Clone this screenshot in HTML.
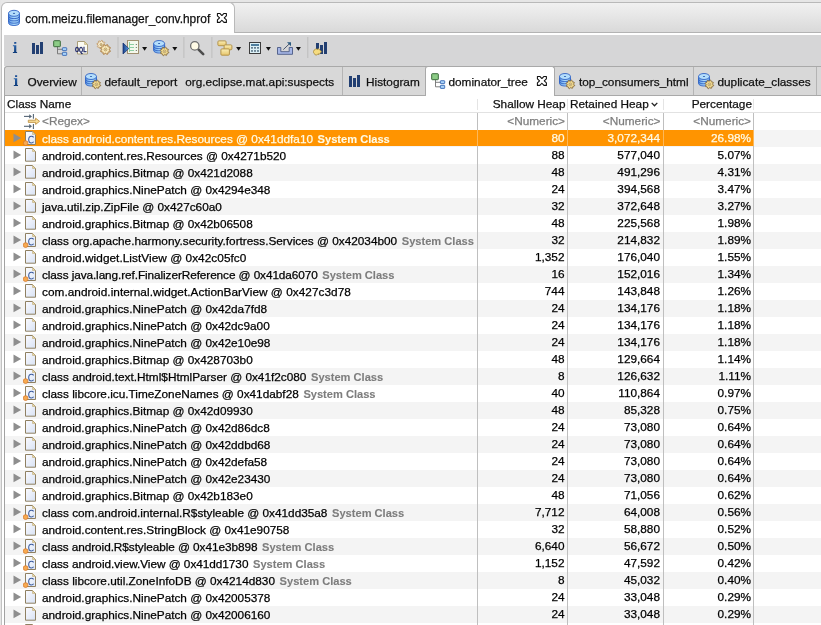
<!DOCTYPE html>
<html><head><meta charset="utf-8">
<style>
*{margin:0;padding:0;box-sizing:border-box}
html,body{width:821px;height:625px;overflow:hidden;background:#fff}
#wrap{position:absolute;left:0;top:0;width:821px;height:625px;will-change:transform}
body{position:relative;font-family:"Liberation Sans",sans-serif;font-size:11.8px;color:#000;-webkit-text-stroke:0.25px currentColor}
.abs{position:absolute}
#lf0{position:absolute;left:0;top:0;width:1px;height:625px;background:#e6e6e6}
#lf1{position:absolute;left:1px;top:30px;width:1px;height:595px;background:#c2c2c2}
#topstrip{position:absolute;left:0;top:0;width:821px;height:2px;background:#e6e6e6}
#titlebar{position:absolute;left:228px;top:2px;width:593px;height:31px;border-top:1px solid #b9b9b9;border-bottom:1px solid #b3b3b3;background:linear-gradient(#f1f1f1,#d9d9d9)}
#titletab{position:absolute;left:1px;top:2px;width:234px;height:31px;background:#fff;border:1px solid #b9b9b9;border-bottom:none;border-radius:6px 6px 0 0}
#titletext{position:absolute;left:25.3px;top:11.2px;line-height:17px;font-size:11.95px;white-space:nowrap;color:#111}
#toolbar{position:absolute;left:4px;top:35px;width:817px;height:31px;background:#d6d6d7}
.tsep{position:absolute;top:37px;width:1px;height:21px;background:#bcbcbc}
.dd{position:absolute;top:47px;width:0;height:0;border-left:2.6px solid transparent;border-right:2.6px solid transparent;border-top:4px solid #111}
#tabbar{position:absolute;left:4px;top:66px;width:817px;height:30px;background:#d8d8d8;border-top:1px solid #a9a9a9;border-bottom:1px solid #a9a9a9;border-left:1px solid #a9a9a9;border-top-left-radius:3px}
.tabsep{position:absolute;top:67px;width:1px;height:28px;background:#b4b4b4}
#acttab{position:absolute;left:425px;top:66px;width:130px;height:30px;background:#fff;border:1px solid #a9a9a9;border-bottom:none;border-radius:3px 3px 0 0}
.tabtext{position:absolute;top:74.4px;line-height:17px;white-space:nowrap;color:#111}
#table{position:absolute;left:4px;top:96px;width:817px;height:529px;background:#fff;border-left:1px solid #a2a2a2}
.hdr{position:absolute;line-height:17px;white-space:nowrap;color:#111;top:96.3px}
#hline{position:absolute;left:5px;top:112px;width:816px;height:1px;background:#e2e2e2}
.hsep{position:absolute;top:99px;width:1px;height:11px;background:#e4e4e4}
.rsep{position:absolute;top:113px;width:1px;height:17px;background:#bfbfbf}
.gray{color:#7e7e7e}
.row{position:absolute;left:5px;width:816px;height:17px}
.row.even{background:#f4f4f4}
.row.odd{background:#fff}
.selbg{position:absolute;left:0;top:0;width:748px;height:16px;background:#ff9400}
.tri-wrap{position:absolute;left:8px;top:3px;width:9px;height:10px}
.tri{display:block}
.ico-wrap{position:absolute;top:1px}
.ico-wrap.f{left:19.5px}
.ico-wrap.c{left:17.5px}
.ico{display:block}
.name{position:absolute;left:37px;top:0.8px;line-height:17px;white-space:nowrap}
.sys{font-weight:bold;color:#7d7d7d;font-size:11.1px;margin-left:4.6px;letter-spacing:0;-webkit-text-stroke:0.1px currentColor}
.num{position:absolute;top:0.3px;line-height:17px;text-align:right;white-space:nowrap}
.c1{right:calc(816px - 559.5px)}
.c2{right:calc(816px - 655px)}
.c3{right:calc(816px - 746px)}
.sep{position:absolute;top:0;width:1px;height:17px;background:#bfbfbf}
.s1{left:472px}.s2{left:562px}.s3{left:658px}.s4{left:748px}
.sel .name,.sel .num,.sel .sys{color:#fffbe6}
.sel .sep{background:linear-gradient(#fcb85a 0,#fcb85a 16px,#bfbfbf 16px)}
</style></head><body><div id="wrap">
<div id="topstrip"></div>
<div id="titlebar"></div>
<div class="abs" style="left:0;top:0;width:12px;height:12px;background:#e8e8e8"></div><div id="titletab"></div>
<div id="lf0"></div><div id="lf1"></div>
<div id="titletext">com.meizu.filemanager_conv.hprof</div>


<div id="toolbar"></div>
<!--TOOLBAR-->
<div id="tabbar"></div>
<div class="tabsep" style="left:81px"></div>
<div class="tabsep" style="left:342px"></div>
<div class="tabsep" style="left:693px"></div>
<div class="tabsep" style="left:816px"></div>
<div id="acttab"></div>
<!--TABS-->
<div class="tabtext" style="left:27.5px">Overview</div>
<div class="tabtext" style="left:104.5px">default_report</div><div class="tabtext" style="left:185.3px">org.eclipse.mat.api:suspects</div>
<div class="tabtext" style="left:366px">Histogram</div>
<div class="tabtext" style="left:448.5px">dominator_tree</div>
<div class="tabtext" style="left:579px">top_consumers_html</div>
<div class="tabtext" style="left:717.5px">duplicate_classes</div>

<div id="table"></div>
<div class="hdr" style="left:7px">Class Name</div>
<div class="hdr" style="right:calc(821px - 565.5px)">Shallow Heap</div>
<div class="hdr" style="left:570px">Retained Heap</div>
<svg class="abs" style="left:651px;top:102px" width="7" height="5" viewBox="0 0 7 5"><path d="M0.7 0.9 L3.5 3.8 L6.3 0.9" fill="none" stroke="#222" stroke-width="1.3"/></svg>
<div class="hdr" style="right:calc(821px - 752px)">Percentage</div>
<div class="hsep" style="left:477px"></div><div class="hsep" style="left:567px"></div><div class="hsep" style="left:663px"></div><div class="hsep" style="left:753px"></div>
<div id="hline"></div>
<!--REGEX-->
<div class="abs gray" style="left:42px;top:113px;line-height:17px">&lt;Regex&gt;</div>
<div class="abs gray" style="right:calc(821px - 565px);top:113px;line-height:17px">&lt;Numeric&gt;</div>
<div class="abs gray" style="right:calc(821px - 660.5px);top:113px;line-height:17px">&lt;Numeric&gt;</div>
<div class="abs gray" style="right:calc(821px - 751px);top:113px;line-height:17px">&lt;Numeric&gt;</div>
<div class="rsep" style="left:477px"></div><div class="rsep" style="left:567px"></div><div class="rsep" style="left:663px"></div><div class="rsep" style="left:753px"></div>
<div class="row even sel" style="top:130px"><div class="selbg"></div><div class="tri-wrap"><svg class="tri" width="9" height="10" viewBox="0 0 9 10"><path d="M0.5 0.5 L8.2 4.9 L0.5 9.3 Z" fill="#8e8e8e"/></svg></div><div class="ico-wrap c"><svg class="ico" width="15" height="16" viewBox="0 0 15 16"><defs><linearGradient id="cg" x1="0" y1="0" x2="1" y2="1"><stop offset="0" stop-color="#fdfdff"/><stop offset="1" stop-color="#dce6f6"/></linearGradient></defs><path d="M2.5 0.5 H9.5 L12.5 3.5 V13.5 H2.5 Z" fill="url(#cg)" stroke="#8f8062" stroke-width="1"/><path d="M9.5 0.5 V3.5 H12.5 Z" fill="#ead7a0" stroke="#b4a070" stroke-width="0.5"/><path d="M10.6 6.4 C10.1 5.6 9.4 5.2 8.4 5.2 C6.6 5.2 5.7 6.7 5.7 8.6 C5.7 10.5 6.6 12 8.4 12 C9.4 12 10.1 11.6 10.6 10.8" fill="none" stroke="#3a5a9c" stroke-width="1.05"/><circle cx="2.6" cy="12.1" r="2.4" fill="#f6aa50" stroke="#d8782c" stroke-width="0.8"/></svg></div><div class="name">class android.content.res.Resources @ 0x41ddfa10<span class="sys">System Class</span></div><div class="num c1">80</div><div class="num c2">3,072,344</div><div class="num c3">26.98%</div><div class="sep s1"></div><div class="sep s2"></div><div class="sep s3"></div><div class="sep s4"></div></div>
<div class="row odd" style="top:147px"><div class="tri-wrap"><svg class="tri" width="9" height="10" viewBox="0 0 9 10"><path d="M0.5 0.5 L8.2 4.9 L0.5 9.3 Z" fill="#8e8e8e"/></svg></div><div class="ico-wrap f"><svg class="ico" width="13" height="16" viewBox="0 0 13 16"><defs><linearGradient id="fg1" x1="0" y1="0" x2="1" y2="1"><stop offset="0" stop-color="#fbfbff"/><stop offset="1" stop-color="#d8e2f4"/></linearGradient></defs><path d="M0.5 0.5 H7.5 L10.5 3.5 V13.2 H0.5 Z" fill="url(#fg1)" stroke="#8f8062" stroke-width="1"/><path d="M7.5 0.5 V3.5 H10.5 Z" fill="#ead7a0" stroke="#b4a070" stroke-width="0.5"/></svg></div><div class="name">android.content.res.Resources @ 0x4271b520</div><div class="num c1">88</div><div class="num c2">577,040</div><div class="num c3">5.07%</div><div class="sep s1"></div><div class="sep s2"></div><div class="sep s3"></div><div class="sep s4"></div></div>
<div class="row even" style="top:164px"><div class="tri-wrap"><svg class="tri" width="9" height="10" viewBox="0 0 9 10"><path d="M0.5 0.5 L8.2 4.9 L0.5 9.3 Z" fill="#8e8e8e"/></svg></div><div class="ico-wrap f"><svg class="ico" width="13" height="16" viewBox="0 0 13 16"><defs><linearGradient id="fg2" x1="0" y1="0" x2="1" y2="1"><stop offset="0" stop-color="#fbfbff"/><stop offset="1" stop-color="#d8e2f4"/></linearGradient></defs><path d="M0.5 0.5 H7.5 L10.5 3.5 V13.2 H0.5 Z" fill="url(#fg2)" stroke="#8f8062" stroke-width="1"/><path d="M7.5 0.5 V3.5 H10.5 Z" fill="#ead7a0" stroke="#b4a070" stroke-width="0.5"/></svg></div><div class="name">android.graphics.Bitmap @ 0x421d2088</div><div class="num c1">48</div><div class="num c2">491,296</div><div class="num c3">4.31%</div><div class="sep s1"></div><div class="sep s2"></div><div class="sep s3"></div><div class="sep s4"></div></div>
<div class="row odd" style="top:181px"><div class="tri-wrap"><svg class="tri" width="9" height="10" viewBox="0 0 9 10"><path d="M0.5 0.5 L8.2 4.9 L0.5 9.3 Z" fill="#8e8e8e"/></svg></div><div class="ico-wrap f"><svg class="ico" width="13" height="16" viewBox="0 0 13 16"><defs><linearGradient id="fg3" x1="0" y1="0" x2="1" y2="1"><stop offset="0" stop-color="#fbfbff"/><stop offset="1" stop-color="#d8e2f4"/></linearGradient></defs><path d="M0.5 0.5 H7.5 L10.5 3.5 V13.2 H0.5 Z" fill="url(#fg3)" stroke="#8f8062" stroke-width="1"/><path d="M7.5 0.5 V3.5 H10.5 Z" fill="#ead7a0" stroke="#b4a070" stroke-width="0.5"/></svg></div><div class="name">android.graphics.NinePatch @ 0x4294e348</div><div class="num c1">24</div><div class="num c2">394,568</div><div class="num c3">3.47%</div><div class="sep s1"></div><div class="sep s2"></div><div class="sep s3"></div><div class="sep s4"></div></div>
<div class="row even" style="top:198px"><div class="tri-wrap"><svg class="tri" width="9" height="10" viewBox="0 0 9 10"><path d="M0.5 0.5 L8.2 4.9 L0.5 9.3 Z" fill="#8e8e8e"/></svg></div><div class="ico-wrap f"><svg class="ico" width="13" height="16" viewBox="0 0 13 16"><defs><linearGradient id="fg4" x1="0" y1="0" x2="1" y2="1"><stop offset="0" stop-color="#fbfbff"/><stop offset="1" stop-color="#d8e2f4"/></linearGradient></defs><path d="M0.5 0.5 H7.5 L10.5 3.5 V13.2 H0.5 Z" fill="url(#fg4)" stroke="#8f8062" stroke-width="1"/><path d="M7.5 0.5 V3.5 H10.5 Z" fill="#ead7a0" stroke="#b4a070" stroke-width="0.5"/></svg></div><div class="name">java.util.zip.ZipFile @ 0x427c60a0</div><div class="num c1">32</div><div class="num c2">372,648</div><div class="num c3">3.27%</div><div class="sep s1"></div><div class="sep s2"></div><div class="sep s3"></div><div class="sep s4"></div></div>
<div class="row odd" style="top:215px"><div class="tri-wrap"><svg class="tri" width="9" height="10" viewBox="0 0 9 10"><path d="M0.5 0.5 L8.2 4.9 L0.5 9.3 Z" fill="#8e8e8e"/></svg></div><div class="ico-wrap f"><svg class="ico" width="13" height="16" viewBox="0 0 13 16"><defs><linearGradient id="fg5" x1="0" y1="0" x2="1" y2="1"><stop offset="0" stop-color="#fbfbff"/><stop offset="1" stop-color="#d8e2f4"/></linearGradient></defs><path d="M0.5 0.5 H7.5 L10.5 3.5 V13.2 H0.5 Z" fill="url(#fg5)" stroke="#8f8062" stroke-width="1"/><path d="M7.5 0.5 V3.5 H10.5 Z" fill="#ead7a0" stroke="#b4a070" stroke-width="0.5"/></svg></div><div class="name">android.graphics.Bitmap @ 0x42b06508</div><div class="num c1">48</div><div class="num c2">225,568</div><div class="num c3">1.98%</div><div class="sep s1"></div><div class="sep s2"></div><div class="sep s3"></div><div class="sep s4"></div></div>
<div class="row even" style="top:232px"><div class="tri-wrap"><svg class="tri" width="9" height="10" viewBox="0 0 9 10"><path d="M0.5 0.5 L8.2 4.9 L0.5 9.3 Z" fill="#8e8e8e"/></svg></div><div class="ico-wrap c"><svg class="ico" width="15" height="16" viewBox="0 0 15 16"><defs><linearGradient id="cg" x1="0" y1="0" x2="1" y2="1"><stop offset="0" stop-color="#fdfdff"/><stop offset="1" stop-color="#dce6f6"/></linearGradient></defs><path d="M2.5 0.5 H9.5 L12.5 3.5 V13.5 H2.5 Z" fill="url(#cg)" stroke="#8f8062" stroke-width="1"/><path d="M9.5 0.5 V3.5 H12.5 Z" fill="#ead7a0" stroke="#b4a070" stroke-width="0.5"/><path d="M10.6 6.4 C10.1 5.6 9.4 5.2 8.4 5.2 C6.6 5.2 5.7 6.7 5.7 8.6 C5.7 10.5 6.6 12 8.4 12 C9.4 12 10.1 11.6 10.6 10.8" fill="none" stroke="#3a5a9c" stroke-width="1.05"/><circle cx="2.6" cy="12.1" r="2.4" fill="#f6aa50" stroke="#d8782c" stroke-width="0.8"/></svg></div><div class="name">class org.apache.harmony.security.fortress.Services @ 0x42034b00<span class="sys">System Class</span></div><div class="num c1">32</div><div class="num c2">214,832</div><div class="num c3">1.89%</div><div class="sep s1"></div><div class="sep s2"></div><div class="sep s3"></div><div class="sep s4"></div></div>
<div class="row odd" style="top:249px"><div class="tri-wrap"><svg class="tri" width="9" height="10" viewBox="0 0 9 10"><path d="M0.5 0.5 L8.2 4.9 L0.5 9.3 Z" fill="#8e8e8e"/></svg></div><div class="ico-wrap f"><svg class="ico" width="13" height="16" viewBox="0 0 13 16"><defs><linearGradient id="fg7" x1="0" y1="0" x2="1" y2="1"><stop offset="0" stop-color="#fbfbff"/><stop offset="1" stop-color="#d8e2f4"/></linearGradient></defs><path d="M0.5 0.5 H7.5 L10.5 3.5 V13.2 H0.5 Z" fill="url(#fg7)" stroke="#8f8062" stroke-width="1"/><path d="M7.5 0.5 V3.5 H10.5 Z" fill="#ead7a0" stroke="#b4a070" stroke-width="0.5"/></svg></div><div class="name" style="letter-spacing:0.05px">android.widget.ListView @ 0x42c05fc0</div><div class="num c1">1,352</div><div class="num c2">176,040</div><div class="num c3">1.55%</div><div class="sep s1"></div><div class="sep s2"></div><div class="sep s3"></div><div class="sep s4"></div></div>
<div class="row even" style="top:266px"><div class="tri-wrap"><svg class="tri" width="9" height="10" viewBox="0 0 9 10"><path d="M0.5 0.5 L8.2 4.9 L0.5 9.3 Z" fill="#8e8e8e"/></svg></div><div class="ico-wrap c"><svg class="ico" width="15" height="16" viewBox="0 0 15 16"><defs><linearGradient id="cg" x1="0" y1="0" x2="1" y2="1"><stop offset="0" stop-color="#fdfdff"/><stop offset="1" stop-color="#dce6f6"/></linearGradient></defs><path d="M2.5 0.5 H9.5 L12.5 3.5 V13.5 H2.5 Z" fill="url(#cg)" stroke="#8f8062" stroke-width="1"/><path d="M9.5 0.5 V3.5 H12.5 Z" fill="#ead7a0" stroke="#b4a070" stroke-width="0.5"/><path d="M10.6 6.4 C10.1 5.6 9.4 5.2 8.4 5.2 C6.6 5.2 5.7 6.7 5.7 8.6 C5.7 10.5 6.6 12 8.4 12 C9.4 12 10.1 11.6 10.6 10.8" fill="none" stroke="#3a5a9c" stroke-width="1.05"/><circle cx="2.6" cy="12.1" r="2.4" fill="#f6aa50" stroke="#d8782c" stroke-width="0.8"/></svg></div><div class="name" style="letter-spacing:-0.088px">class java.lang.ref.FinalizerReference @ 0x41da6070<span class="sys">System Class</span></div><div class="num c1">16</div><div class="num c2">152,016</div><div class="num c3">1.34%</div><div class="sep s1"></div><div class="sep s2"></div><div class="sep s3"></div><div class="sep s4"></div></div>
<div class="row odd" style="top:283px"><div class="tri-wrap"><svg class="tri" width="9" height="10" viewBox="0 0 9 10"><path d="M0.5 0.5 L8.2 4.9 L0.5 9.3 Z" fill="#8e8e8e"/></svg></div><div class="ico-wrap f"><svg class="ico" width="13" height="16" viewBox="0 0 13 16"><defs><linearGradient id="fg9" x1="0" y1="0" x2="1" y2="1"><stop offset="0" stop-color="#fbfbff"/><stop offset="1" stop-color="#d8e2f4"/></linearGradient></defs><path d="M0.5 0.5 H7.5 L10.5 3.5 V13.2 H0.5 Z" fill="url(#fg9)" stroke="#8f8062" stroke-width="1"/><path d="M7.5 0.5 V3.5 H10.5 Z" fill="#ead7a0" stroke="#b4a070" stroke-width="0.5"/></svg></div><div class="name" style="letter-spacing:0.037px">com.android.internal.widget.ActionBarView @ 0x427c3d78</div><div class="num c1">744</div><div class="num c2">143,848</div><div class="num c3">1.26%</div><div class="sep s1"></div><div class="sep s2"></div><div class="sep s3"></div><div class="sep s4"></div></div>
<div class="row even" style="top:300px"><div class="tri-wrap"><svg class="tri" width="9" height="10" viewBox="0 0 9 10"><path d="M0.5 0.5 L8.2 4.9 L0.5 9.3 Z" fill="#8e8e8e"/></svg></div><div class="ico-wrap f"><svg class="ico" width="13" height="16" viewBox="0 0 13 16"><defs><linearGradient id="fg10" x1="0" y1="0" x2="1" y2="1"><stop offset="0" stop-color="#fbfbff"/><stop offset="1" stop-color="#d8e2f4"/></linearGradient></defs><path d="M0.5 0.5 H7.5 L10.5 3.5 V13.2 H0.5 Z" fill="url(#fg10)" stroke="#8f8062" stroke-width="1"/><path d="M7.5 0.5 V3.5 H10.5 Z" fill="#ead7a0" stroke="#b4a070" stroke-width="0.5"/></svg></div><div class="name">android.graphics.NinePatch @ 0x42da7fd8</div><div class="num c1">24</div><div class="num c2">134,176</div><div class="num c3">1.18%</div><div class="sep s1"></div><div class="sep s2"></div><div class="sep s3"></div><div class="sep s4"></div></div>
<div class="row odd" style="top:317px"><div class="tri-wrap"><svg class="tri" width="9" height="10" viewBox="0 0 9 10"><path d="M0.5 0.5 L8.2 4.9 L0.5 9.3 Z" fill="#8e8e8e"/></svg></div><div class="ico-wrap f"><svg class="ico" width="13" height="16" viewBox="0 0 13 16"><defs><linearGradient id="fg11" x1="0" y1="0" x2="1" y2="1"><stop offset="0" stop-color="#fbfbff"/><stop offset="1" stop-color="#d8e2f4"/></linearGradient></defs><path d="M0.5 0.5 H7.5 L10.5 3.5 V13.2 H0.5 Z" fill="url(#fg11)" stroke="#8f8062" stroke-width="1"/><path d="M7.5 0.5 V3.5 H10.5 Z" fill="#ead7a0" stroke="#b4a070" stroke-width="0.5"/></svg></div><div class="name">android.graphics.NinePatch @ 0x42dc9a00</div><div class="num c1">24</div><div class="num c2">134,176</div><div class="num c3">1.18%</div><div class="sep s1"></div><div class="sep s2"></div><div class="sep s3"></div><div class="sep s4"></div></div>
<div class="row even" style="top:334px"><div class="tri-wrap"><svg class="tri" width="9" height="10" viewBox="0 0 9 10"><path d="M0.5 0.5 L8.2 4.9 L0.5 9.3 Z" fill="#8e8e8e"/></svg></div><div class="ico-wrap f"><svg class="ico" width="13" height="16" viewBox="0 0 13 16"><defs><linearGradient id="fg12" x1="0" y1="0" x2="1" y2="1"><stop offset="0" stop-color="#fbfbff"/><stop offset="1" stop-color="#d8e2f4"/></linearGradient></defs><path d="M0.5 0.5 H7.5 L10.5 3.5 V13.2 H0.5 Z" fill="url(#fg12)" stroke="#8f8062" stroke-width="1"/><path d="M7.5 0.5 V3.5 H10.5 Z" fill="#ead7a0" stroke="#b4a070" stroke-width="0.5"/></svg></div><div class="name">android.graphics.NinePatch @ 0x42e10e98</div><div class="num c1">24</div><div class="num c2">134,176</div><div class="num c3">1.18%</div><div class="sep s1"></div><div class="sep s2"></div><div class="sep s3"></div><div class="sep s4"></div></div>
<div class="row odd" style="top:351px"><div class="tri-wrap"><svg class="tri" width="9" height="10" viewBox="0 0 9 10"><path d="M0.5 0.5 L8.2 4.9 L0.5 9.3 Z" fill="#8e8e8e"/></svg></div><div class="ico-wrap f"><svg class="ico" width="13" height="16" viewBox="0 0 13 16"><defs><linearGradient id="fg13" x1="0" y1="0" x2="1" y2="1"><stop offset="0" stop-color="#fbfbff"/><stop offset="1" stop-color="#d8e2f4"/></linearGradient></defs><path d="M0.5 0.5 H7.5 L10.5 3.5 V13.2 H0.5 Z" fill="url(#fg13)" stroke="#8f8062" stroke-width="1"/><path d="M7.5 0.5 V3.5 H10.5 Z" fill="#ead7a0" stroke="#b4a070" stroke-width="0.5"/></svg></div><div class="name">android.graphics.Bitmap @ 0x428703b0</div><div class="num c1">48</div><div class="num c2">129,664</div><div class="num c3">1.14%</div><div class="sep s1"></div><div class="sep s2"></div><div class="sep s3"></div><div class="sep s4"></div></div>
<div class="row even" style="top:368px"><div class="tri-wrap"><svg class="tri" width="9" height="10" viewBox="0 0 9 10"><path d="M0.5 0.5 L8.2 4.9 L0.5 9.3 Z" fill="#8e8e8e"/></svg></div><div class="ico-wrap c"><svg class="ico" width="15" height="16" viewBox="0 0 15 16"><defs><linearGradient id="cg" x1="0" y1="0" x2="1" y2="1"><stop offset="0" stop-color="#fdfdff"/><stop offset="1" stop-color="#dce6f6"/></linearGradient></defs><path d="M2.5 0.5 H9.5 L12.5 3.5 V13.5 H2.5 Z" fill="url(#cg)" stroke="#8f8062" stroke-width="1"/><path d="M9.5 0.5 V3.5 H12.5 Z" fill="#ead7a0" stroke="#b4a070" stroke-width="0.5"/><path d="M10.6 6.4 C10.1 5.6 9.4 5.2 8.4 5.2 C6.6 5.2 5.7 6.7 5.7 8.6 C5.7 10.5 6.6 12 8.4 12 C9.4 12 10.1 11.6 10.6 10.8" fill="none" stroke="#3a5a9c" stroke-width="1.05"/><circle cx="2.6" cy="12.1" r="2.4" fill="#f6aa50" stroke="#d8782c" stroke-width="0.8"/></svg></div><div class="name">class android.text.Html$HtmlParser @ 0x41f2c080<span class="sys">System Class</span></div><div class="num c1">8</div><div class="num c2">126,632</div><div class="num c3">1.11%</div><div class="sep s1"></div><div class="sep s2"></div><div class="sep s3"></div><div class="sep s4"></div></div>
<div class="row odd" style="top:385px"><div class="tri-wrap"><svg class="tri" width="9" height="10" viewBox="0 0 9 10"><path d="M0.5 0.5 L8.2 4.9 L0.5 9.3 Z" fill="#8e8e8e"/></svg></div><div class="ico-wrap c"><svg class="ico" width="15" height="16" viewBox="0 0 15 16"><defs><linearGradient id="cg" x1="0" y1="0" x2="1" y2="1"><stop offset="0" stop-color="#fdfdff"/><stop offset="1" stop-color="#dce6f6"/></linearGradient></defs><path d="M2.5 0.5 H9.5 L12.5 3.5 V13.5 H2.5 Z" fill="url(#cg)" stroke="#8f8062" stroke-width="1"/><path d="M9.5 0.5 V3.5 H12.5 Z" fill="#ead7a0" stroke="#b4a070" stroke-width="0.5"/><path d="M10.6 6.4 C10.1 5.6 9.4 5.2 8.4 5.2 C6.6 5.2 5.7 6.7 5.7 8.6 C5.7 10.5 6.6 12 8.4 12 C9.4 12 10.1 11.6 10.6 10.8" fill="none" stroke="#3a5a9c" stroke-width="1.05"/><circle cx="2.6" cy="12.1" r="2.4" fill="#f6aa50" stroke="#d8782c" stroke-width="0.8"/></svg></div><div class="name">class libcore.icu.TimeZoneNames @ 0x41dabf28<span class="sys">System Class</span></div><div class="num c1">40</div><div class="num c2">110,864</div><div class="num c3">0.97%</div><div class="sep s1"></div><div class="sep s2"></div><div class="sep s3"></div><div class="sep s4"></div></div>
<div class="row even" style="top:402px"><div class="tri-wrap"><svg class="tri" width="9" height="10" viewBox="0 0 9 10"><path d="M0.5 0.5 L8.2 4.9 L0.5 9.3 Z" fill="#8e8e8e"/></svg></div><div class="ico-wrap f"><svg class="ico" width="13" height="16" viewBox="0 0 13 16"><defs><linearGradient id="fg16" x1="0" y1="0" x2="1" y2="1"><stop offset="0" stop-color="#fbfbff"/><stop offset="1" stop-color="#d8e2f4"/></linearGradient></defs><path d="M0.5 0.5 H7.5 L10.5 3.5 V13.2 H0.5 Z" fill="url(#fg16)" stroke="#8f8062" stroke-width="1"/><path d="M7.5 0.5 V3.5 H10.5 Z" fill="#ead7a0" stroke="#b4a070" stroke-width="0.5"/></svg></div><div class="name">android.graphics.Bitmap @ 0x42d09930</div><div class="num c1">48</div><div class="num c2">85,328</div><div class="num c3">0.75%</div><div class="sep s1"></div><div class="sep s2"></div><div class="sep s3"></div><div class="sep s4"></div></div>
<div class="row odd" style="top:419px"><div class="tri-wrap"><svg class="tri" width="9" height="10" viewBox="0 0 9 10"><path d="M0.5 0.5 L8.2 4.9 L0.5 9.3 Z" fill="#8e8e8e"/></svg></div><div class="ico-wrap f"><svg class="ico" width="13" height="16" viewBox="0 0 13 16"><defs><linearGradient id="fg17" x1="0" y1="0" x2="1" y2="1"><stop offset="0" stop-color="#fbfbff"/><stop offset="1" stop-color="#d8e2f4"/></linearGradient></defs><path d="M0.5 0.5 H7.5 L10.5 3.5 V13.2 H0.5 Z" fill="url(#fg17)" stroke="#8f8062" stroke-width="1"/><path d="M7.5 0.5 V3.5 H10.5 Z" fill="#ead7a0" stroke="#b4a070" stroke-width="0.5"/></svg></div><div class="name">android.graphics.NinePatch @ 0x42d86dc8</div><div class="num c1">24</div><div class="num c2">73,080</div><div class="num c3">0.64%</div><div class="sep s1"></div><div class="sep s2"></div><div class="sep s3"></div><div class="sep s4"></div></div>
<div class="row even" style="top:436px"><div class="tri-wrap"><svg class="tri" width="9" height="10" viewBox="0 0 9 10"><path d="M0.5 0.5 L8.2 4.9 L0.5 9.3 Z" fill="#8e8e8e"/></svg></div><div class="ico-wrap f"><svg class="ico" width="13" height="16" viewBox="0 0 13 16"><defs><linearGradient id="fg18" x1="0" y1="0" x2="1" y2="1"><stop offset="0" stop-color="#fbfbff"/><stop offset="1" stop-color="#d8e2f4"/></linearGradient></defs><path d="M0.5 0.5 H7.5 L10.5 3.5 V13.2 H0.5 Z" fill="url(#fg18)" stroke="#8f8062" stroke-width="1"/><path d="M7.5 0.5 V3.5 H10.5 Z" fill="#ead7a0" stroke="#b4a070" stroke-width="0.5"/></svg></div><div class="name">android.graphics.NinePatch @ 0x42ddbd68</div><div class="num c1">24</div><div class="num c2">73,080</div><div class="num c3">0.64%</div><div class="sep s1"></div><div class="sep s2"></div><div class="sep s3"></div><div class="sep s4"></div></div>
<div class="row odd" style="top:453px"><div class="tri-wrap"><svg class="tri" width="9" height="10" viewBox="0 0 9 10"><path d="M0.5 0.5 L8.2 4.9 L0.5 9.3 Z" fill="#8e8e8e"/></svg></div><div class="ico-wrap f"><svg class="ico" width="13" height="16" viewBox="0 0 13 16"><defs><linearGradient id="fg19" x1="0" y1="0" x2="1" y2="1"><stop offset="0" stop-color="#fbfbff"/><stop offset="1" stop-color="#d8e2f4"/></linearGradient></defs><path d="M0.5 0.5 H7.5 L10.5 3.5 V13.2 H0.5 Z" fill="url(#fg19)" stroke="#8f8062" stroke-width="1"/><path d="M7.5 0.5 V3.5 H10.5 Z" fill="#ead7a0" stroke="#b4a070" stroke-width="0.5"/></svg></div><div class="name">android.graphics.NinePatch @ 0x42defa58</div><div class="num c1">24</div><div class="num c2">73,080</div><div class="num c3">0.64%</div><div class="sep s1"></div><div class="sep s2"></div><div class="sep s3"></div><div class="sep s4"></div></div>
<div class="row even" style="top:470px"><div class="tri-wrap"><svg class="tri" width="9" height="10" viewBox="0 0 9 10"><path d="M0.5 0.5 L8.2 4.9 L0.5 9.3 Z" fill="#8e8e8e"/></svg></div><div class="ico-wrap f"><svg class="ico" width="13" height="16" viewBox="0 0 13 16"><defs><linearGradient id="fg20" x1="0" y1="0" x2="1" y2="1"><stop offset="0" stop-color="#fbfbff"/><stop offset="1" stop-color="#d8e2f4"/></linearGradient></defs><path d="M0.5 0.5 H7.5 L10.5 3.5 V13.2 H0.5 Z" fill="url(#fg20)" stroke="#8f8062" stroke-width="1"/><path d="M7.5 0.5 V3.5 H10.5 Z" fill="#ead7a0" stroke="#b4a070" stroke-width="0.5"/></svg></div><div class="name">android.graphics.NinePatch @ 0x42e23430</div><div class="num c1">24</div><div class="num c2">73,080</div><div class="num c3">0.64%</div><div class="sep s1"></div><div class="sep s2"></div><div class="sep s3"></div><div class="sep s4"></div></div>
<div class="row odd" style="top:487px"><div class="tri-wrap"><svg class="tri" width="9" height="10" viewBox="0 0 9 10"><path d="M0.5 0.5 L8.2 4.9 L0.5 9.3 Z" fill="#8e8e8e"/></svg></div><div class="ico-wrap f"><svg class="ico" width="13" height="16" viewBox="0 0 13 16"><defs><linearGradient id="fg21" x1="0" y1="0" x2="1" y2="1"><stop offset="0" stop-color="#fbfbff"/><stop offset="1" stop-color="#d8e2f4"/></linearGradient></defs><path d="M0.5 0.5 H7.5 L10.5 3.5 V13.2 H0.5 Z" fill="url(#fg21)" stroke="#8f8062" stroke-width="1"/><path d="M7.5 0.5 V3.5 H10.5 Z" fill="#ead7a0" stroke="#b4a070" stroke-width="0.5"/></svg></div><div class="name">android.graphics.Bitmap @ 0x42b183e0</div><div class="num c1">48</div><div class="num c2">71,056</div><div class="num c3">0.62%</div><div class="sep s1"></div><div class="sep s2"></div><div class="sep s3"></div><div class="sep s4"></div></div>
<div class="row even" style="top:504px"><div class="tri-wrap"><svg class="tri" width="9" height="10" viewBox="0 0 9 10"><path d="M0.5 0.5 L8.2 4.9 L0.5 9.3 Z" fill="#8e8e8e"/></svg></div><div class="ico-wrap c"><svg class="ico" width="15" height="16" viewBox="0 0 15 16"><defs><linearGradient id="cg" x1="0" y1="0" x2="1" y2="1"><stop offset="0" stop-color="#fdfdff"/><stop offset="1" stop-color="#dce6f6"/></linearGradient></defs><path d="M2.5 0.5 H9.5 L12.5 3.5 V13.5 H2.5 Z" fill="url(#cg)" stroke="#8f8062" stroke-width="1"/><path d="M9.5 0.5 V3.5 H12.5 Z" fill="#ead7a0" stroke="#b4a070" stroke-width="0.5"/><path d="M10.6 6.4 C10.1 5.6 9.4 5.2 8.4 5.2 C6.6 5.2 5.7 6.7 5.7 8.6 C5.7 10.5 6.6 12 8.4 12 C9.4 12 10.1 11.6 10.6 10.8" fill="none" stroke="#3a5a9c" stroke-width="1.05"/><circle cx="2.6" cy="12.1" r="2.4" fill="#f6aa50" stroke="#d8782c" stroke-width="0.8"/></svg></div><div class="name">class com.android.internal.R$styleable @ 0x41dd35a8<span class="sys">System Class</span></div><div class="num c1">7,712</div><div class="num c2">64,008</div><div class="num c3">0.56%</div><div class="sep s1"></div><div class="sep s2"></div><div class="sep s3"></div><div class="sep s4"></div></div>
<div class="row odd" style="top:521px"><div class="tri-wrap"><svg class="tri" width="9" height="10" viewBox="0 0 9 10"><path d="M0.5 0.5 L8.2 4.9 L0.5 9.3 Z" fill="#8e8e8e"/></svg></div><div class="ico-wrap f"><svg class="ico" width="13" height="16" viewBox="0 0 13 16"><defs><linearGradient id="fg23" x1="0" y1="0" x2="1" y2="1"><stop offset="0" stop-color="#fbfbff"/><stop offset="1" stop-color="#d8e2f4"/></linearGradient></defs><path d="M0.5 0.5 H7.5 L10.5 3.5 V13.2 H0.5 Z" fill="url(#fg23)" stroke="#8f8062" stroke-width="1"/><path d="M7.5 0.5 V3.5 H10.5 Z" fill="#ead7a0" stroke="#b4a070" stroke-width="0.5"/></svg></div><div class="name">android.content.res.StringBlock @ 0x41e90758</div><div class="num c1">32</div><div class="num c2">58,880</div><div class="num c3">0.52%</div><div class="sep s1"></div><div class="sep s2"></div><div class="sep s3"></div><div class="sep s4"></div></div>
<div class="row even" style="top:538px"><div class="tri-wrap"><svg class="tri" width="9" height="10" viewBox="0 0 9 10"><path d="M0.5 0.5 L8.2 4.9 L0.5 9.3 Z" fill="#8e8e8e"/></svg></div><div class="ico-wrap c"><svg class="ico" width="15" height="16" viewBox="0 0 15 16"><defs><linearGradient id="cg" x1="0" y1="0" x2="1" y2="1"><stop offset="0" stop-color="#fdfdff"/><stop offset="1" stop-color="#dce6f6"/></linearGradient></defs><path d="M2.5 0.5 H9.5 L12.5 3.5 V13.5 H2.5 Z" fill="url(#cg)" stroke="#8f8062" stroke-width="1"/><path d="M9.5 0.5 V3.5 H12.5 Z" fill="#ead7a0" stroke="#b4a070" stroke-width="0.5"/><path d="M10.6 6.4 C10.1 5.6 9.4 5.2 8.4 5.2 C6.6 5.2 5.7 6.7 5.7 8.6 C5.7 10.5 6.6 12 8.4 12 C9.4 12 10.1 11.6 10.6 10.8" fill="none" stroke="#3a5a9c" stroke-width="1.05"/><circle cx="2.6" cy="12.1" r="2.4" fill="#f6aa50" stroke="#d8782c" stroke-width="0.8"/></svg></div><div class="name" style="letter-spacing:-0.066px">class android.R$styleable @ 0x41e3b898<span class="sys">System Class</span></div><div class="num c1">6,640</div><div class="num c2">56,672</div><div class="num c3">0.50%</div><div class="sep s1"></div><div class="sep s2"></div><div class="sep s3"></div><div class="sep s4"></div></div>
<div class="row odd" style="top:555px"><div class="tri-wrap"><svg class="tri" width="9" height="10" viewBox="0 0 9 10"><path d="M0.5 0.5 L8.2 4.9 L0.5 9.3 Z" fill="#8e8e8e"/></svg></div><div class="ico-wrap c"><svg class="ico" width="15" height="16" viewBox="0 0 15 16"><defs><linearGradient id="cg" x1="0" y1="0" x2="1" y2="1"><stop offset="0" stop-color="#fdfdff"/><stop offset="1" stop-color="#dce6f6"/></linearGradient></defs><path d="M2.5 0.5 H9.5 L12.5 3.5 V13.5 H2.5 Z" fill="url(#cg)" stroke="#8f8062" stroke-width="1"/><path d="M9.5 0.5 V3.5 H12.5 Z" fill="#ead7a0" stroke="#b4a070" stroke-width="0.5"/><path d="M10.6 6.4 C10.1 5.6 9.4 5.2 8.4 5.2 C6.6 5.2 5.7 6.7 5.7 8.6 C5.7 10.5 6.6 12 8.4 12 C9.4 12 10.1 11.6 10.6 10.8" fill="none" stroke="#3a5a9c" stroke-width="1.05"/><circle cx="2.6" cy="12.1" r="2.4" fill="#f6aa50" stroke="#d8782c" stroke-width="0.8"/></svg></div><div class="name" style="letter-spacing:-0.04px">class android.view.View @ 0x41dd1730<span class="sys">System Class</span></div><div class="num c1">1,152</div><div class="num c2">47,592</div><div class="num c3">0.42%</div><div class="sep s1"></div><div class="sep s2"></div><div class="sep s3"></div><div class="sep s4"></div></div>
<div class="row even" style="top:572px"><div class="tri-wrap"><svg class="tri" width="9" height="10" viewBox="0 0 9 10"><path d="M0.5 0.5 L8.2 4.9 L0.5 9.3 Z" fill="#8e8e8e"/></svg></div><div class="ico-wrap c"><svg class="ico" width="15" height="16" viewBox="0 0 15 16"><defs><linearGradient id="cg" x1="0" y1="0" x2="1" y2="1"><stop offset="0" stop-color="#fdfdff"/><stop offset="1" stop-color="#dce6f6"/></linearGradient></defs><path d="M2.5 0.5 H9.5 L12.5 3.5 V13.5 H2.5 Z" fill="url(#cg)" stroke="#8f8062" stroke-width="1"/><path d="M9.5 0.5 V3.5 H12.5 Z" fill="#ead7a0" stroke="#b4a070" stroke-width="0.5"/><path d="M10.6 6.4 C10.1 5.6 9.4 5.2 8.4 5.2 C6.6 5.2 5.7 6.7 5.7 8.6 C5.7 10.5 6.6 12 8.4 12 C9.4 12 10.1 11.6 10.6 10.8" fill="none" stroke="#3a5a9c" stroke-width="1.05"/><circle cx="2.6" cy="12.1" r="2.4" fill="#f6aa50" stroke="#d8782c" stroke-width="0.8"/></svg></div><div class="name">class libcore.util.ZoneInfoDB @ 0x4214d830<span class="sys">System Class</span></div><div class="num c1">8</div><div class="num c2">45,032</div><div class="num c3">0.40%</div><div class="sep s1"></div><div class="sep s2"></div><div class="sep s3"></div><div class="sep s4"></div></div>
<div class="row odd" style="top:589px"><div class="tri-wrap"><svg class="tri" width="9" height="10" viewBox="0 0 9 10"><path d="M0.5 0.5 L8.2 4.9 L0.5 9.3 Z" fill="#8e8e8e"/></svg></div><div class="ico-wrap f"><svg class="ico" width="13" height="16" viewBox="0 0 13 16"><defs><linearGradient id="fg27" x1="0" y1="0" x2="1" y2="1"><stop offset="0" stop-color="#fbfbff"/><stop offset="1" stop-color="#d8e2f4"/></linearGradient></defs><path d="M0.5 0.5 H7.5 L10.5 3.5 V13.2 H0.5 Z" fill="url(#fg27)" stroke="#8f8062" stroke-width="1"/><path d="M7.5 0.5 V3.5 H10.5 Z" fill="#ead7a0" stroke="#b4a070" stroke-width="0.5"/></svg></div><div class="name">android.graphics.NinePatch @ 0x42005378</div><div class="num c1">24</div><div class="num c2">33,048</div><div class="num c3">0.29%</div><div class="sep s1"></div><div class="sep s2"></div><div class="sep s3"></div><div class="sep s4"></div></div>
<div class="row even" style="top:606px"><div class="tri-wrap"><svg class="tri" width="9" height="10" viewBox="0 0 9 10"><path d="M0.5 0.5 L8.2 4.9 L0.5 9.3 Z" fill="#8e8e8e"/></svg></div><div class="ico-wrap f"><svg class="ico" width="13" height="16" viewBox="0 0 13 16"><defs><linearGradient id="fg28" x1="0" y1="0" x2="1" y2="1"><stop offset="0" stop-color="#fbfbff"/><stop offset="1" stop-color="#d8e2f4"/></linearGradient></defs><path d="M0.5 0.5 H7.5 L10.5 3.5 V13.2 H0.5 Z" fill="url(#fg28)" stroke="#8f8062" stroke-width="1"/><path d="M7.5 0.5 V3.5 H10.5 Z" fill="#ead7a0" stroke="#b4a070" stroke-width="0.5"/></svg></div><div class="name">android.graphics.NinePatch @ 0x42006160</div><div class="num c1">24</div><div class="num c2">33,048</div><div class="num c3">0.29%</div><div class="sep s1"></div><div class="sep s2"></div><div class="sep s3"></div><div class="sep s4"></div></div>
<div class="row odd" style="top:623px"><div class="tri-wrap"><svg class="tri" width="9" height="10" viewBox="0 0 9 10"><path d="M0.5 0.5 L8.2 4.9 L0.5 9.3 Z" fill="#8e8e8e"/></svg></div><div class="ico-wrap f"><svg class="ico" width="13" height="16" viewBox="0 0 13 16"><defs><linearGradient id="fg29" x1="0" y1="0" x2="1" y2="1"><stop offset="0" stop-color="#fbfbff"/><stop offset="1" stop-color="#d8e2f4"/></linearGradient></defs><path d="M0.5 0.5 H7.5 L10.5 3.5 V13.2 H0.5 Z" fill="url(#fg29)" stroke="#8f8062" stroke-width="1"/><path d="M7.5 0.5 V3.5 H10.5 Z" fill="#ead7a0" stroke="#b4a070" stroke-width="0.5"/></svg></div><div class="sep s1"></div><div class="sep s2"></div><div class="sep s3"></div><div class="sep s4"></div></div>
<svg class="abs" style="left:0;top:0" width="821" height="130" viewBox="0 0 821 130"><defs>
<linearGradient id="dbfill" x1="0" x2="1" y1="0" y2="0"><stop offset="0" stop-color="#5896e6"/><stop offset="0.5" stop-color="#acdafc"/><stop offset="1" stop-color="#80b8f0"/></linearGradient>
<linearGradient id="infog" x1="0" x2="0" y1="0" y2="1"><stop offset="0" stop-color="#2a64ac"/><stop offset="1" stop-color="#0e3a78"/></linearGradient>
<linearGradient id="yel" x1="0" x2="0" y1="0" y2="1"><stop offset="0" stop-color="#fbefb8"/><stop offset="1" stop-color="#e6c56a"/></linearGradient>
<linearGradient id="runtri" x1="0" x2="1" y1="0" y2="0"><stop offset="0" stop-color="#1a3f8a"/><stop offset="1" stop-color="#5aa0e0"/></linearGradient>
</defs><path d="M8.5 13.3 V22.5 C8.5 24.7 11.0 25.5 14.0 25.5 C17.0 25.5 19.5 24.7 19.5 22.5 V13.3 Z" fill="url(#dbfill)" stroke="#3264c4" stroke-width="0.9"/><path d="M8.5 15.600000000000001 C8.5 18.0 11.0 18.6 14.0 18.6 C17.0 18.6 19.5 18.0 19.5 15.600000000000001" fill="none" stroke="#3264c4" stroke-width="0.9"/><path d="M8.5 17.9 C8.5 20.299999999999997 11.0 20.9 14.0 20.9 C17.0 20.9 19.5 20.299999999999997 19.5 17.9" fill="none" stroke="#3264c4" stroke-width="0.9"/><path d="M8.5 20.2 C8.5 22.6 11.0 23.2 14.0 23.2 C17.0 23.2 19.5 22.6 19.5 20.2" fill="none" stroke="#3264c4" stroke-width="0.9"/><ellipse cx="14.0" cy="13.3" rx="5.5" ry="3.0" fill="#b4defc" stroke="#3264c4" stroke-width="0.9"/><ellipse cx="14.0" cy="13.3" rx="1.1" ry="0.6" fill="#2a5aa8"/><g transform="translate(216.8,12.8) scale(1.02)"><path d="M0.6 0.6 H3 L5 2.7 L7 0.6 H9.4 V3 L7.3 5 L9.4 7 V9.4 H7 L5 7.3 L3 9.4 H0.6 V7 L2.7 5 L0.6 3 Z" fill="#fff" stroke="#111" stroke-width="1.05" stroke-linejoin="round"/></g><g transform="translate(0.0,0.0)"><rect x="14.1" y="42.1" width="2.2" height="1.7" rx="0.4" fill="#1d4f94"/><path d="M12.9 45.2 H16.3 V51.9 H17.1 V52.9 H12.9 V51.9 H14.1 V46.2 H12.9 Z" fill="url(#infog)"/></g><g transform="translate(0,0)" fill="#223f72"><rect x="32" y="43" width="3" height="11"/><rect x="36" y="45" width="3" height="9"/><rect x="40" y="42" width="3" height="12"/></g><g transform="translate(0.0,0.0)"><path d="M57.5 46.5 V53.8 H62.5 M57.5 49.3 H62.5" fill="none" stroke="#707070" stroke-width="0.9"/><rect x="53.7" y="40.7" width="6.6" height="6" rx="0.6" fill="#8ccc86" stroke="#3a6a3a" stroke-width="1"/><rect x="62.4" y="47.7" width="4.3" height="2.9" rx="0.5" fill="#a9d3fa" stroke="#3a6ab4" stroke-width="0.9"/><rect x="62.4" y="52.3" width="4.3" height="3.1" rx="0.5" fill="#a9d3fa" stroke="#3a6ab4" stroke-width="0.9"/></g><path d="M77.5 41.5 H84.5 L87.5 44.5 V54 H77.5 Z" fill="#fbfbf2" stroke="#a89c78" stroke-width="1"/><path d="M84.5 41.5 V44.5 H87.5 Z" fill="#e6d7a0" stroke="#b0a070" stroke-width="0.5"/><text x="75" y="51.7" font-family="Liberation Sans" font-weight="bold" font-size="7.2" fill="#1b2466" stroke="#1b2466" stroke-width="0.3" textLength="11.4" lengthAdjust="spacingAndGlyphs">OQL</text><path d="M105.28 45.02 L105.12 45.83 L103.83 46.07 L103.49 46.57 L103.76 47.85 L103.07 48.31 L101.99 47.57 L101.40 47.69 L100.68 48.78 L99.87 48.62 L99.63 47.33 L99.13 46.99 L97.85 47.26 L97.39 46.57 L98.13 45.49 L98.01 44.90 L96.92 44.18 L97.08 43.37 L98.37 43.13 L98.71 42.63 L98.44 41.35 L99.13 40.89 L100.21 41.63 L100.80 41.51 L101.52 40.42 L102.33 40.58 L102.57 41.87 L103.07 42.21 L104.35 41.94 L104.81 42.63 L104.07 43.71 L104.19 44.30 Z" fill="#f8eccc" stroke="#c09868" stroke-width="0.9" stroke-linejoin="round"/><circle cx="101.1" cy="44.6" r="1.1" fill="#f4e6b4" stroke="#9a7a40" stroke-width="0.6"/><circle cx="101.1" cy="44.6" r="0.45" fill="#8a6a38"/><path d="M110.37 51.01 L109.98 51.93 L108.50 51.99 L107.96 52.53 L107.88 54.01 L106.95 54.39 L105.86 53.38 L105.10 53.38 L103.99 54.37 L103.07 53.98 L103.01 52.50 L102.47 51.96 L100.99 51.88 L100.61 50.95 L101.62 49.86 L101.62 49.10 L100.63 47.99 L101.02 47.07 L102.50 47.01 L103.04 46.47 L103.12 44.99 L104.05 44.61 L105.14 45.62 L105.90 45.62 L107.01 44.63 L107.93 45.02 L107.99 46.50 L108.53 47.04 L110.01 47.12 L110.39 48.05 L109.38 49.14 L109.38 49.90 Z" fill="#f6e6b8" stroke="#a87a40" stroke-width="1.0" stroke-linejoin="round"/><circle cx="105.5" cy="49.5" r="1.4" fill="#f4e6b4" stroke="#9a7a40" stroke-width="0.6"/><circle cx="105.5" cy="49.5" r="0.45" fill="#8a6a38"/><rect x="117.5" y="37" width="1" height="21" fill="#bdbdbd"/><rect x="127.5" y="40.5" width="11" height="13" fill="#f4f8ec" stroke="#a09070" stroke-width="1"/><path d="M129.5 42 V52 M129.5 44.5 H134 M129.5 47.5 H134 M129.5 50.5 H134" fill="none" stroke="#82c89a" stroke-width="0.9"/><circle cx="136.3" cy="44.5" r="0.6" fill="#555"/><circle cx="136.3" cy="47.5" r="0.6" fill="#555"/><circle cx="136.3" cy="50.5" r="0.6" fill="#555"/><path d="M123 43 L128.8 48.5 L123 54 Z" fill="url(#runtri)" stroke="#0f2c6a" stroke-width="0.7"/><path d="M142.1 47 H147.1 L144.6 50.8 Z" fill="#111"/><path d="M153.6 43.5 V50.0 C153.6 52.2 156.1 53.0 159.1 53.0 C162.1 53.0 164.6 52.2 164.6 50.0 V43.5 Z" fill="url(#dbfill)" stroke="#3264c4" stroke-width="0.9"/><path d="M153.6 45.666666666666664 C153.6 48.06666666666666 156.1 48.666666666666664 159.1 48.666666666666664 C162.1 48.666666666666664 164.6 48.06666666666666 164.6 45.666666666666664" fill="none" stroke="#3264c4" stroke-width="0.9"/><path d="M153.6 47.833333333333336 C153.6 50.233333333333334 156.1 50.833333333333336 159.1 50.833333333333336 C162.1 50.833333333333336 164.6 50.233333333333334 164.6 47.833333333333336" fill="none" stroke="#3264c4" stroke-width="0.9"/><ellipse cx="159.1" cy="43.5" rx="5.5" ry="3.0" fill="#b4defc" stroke="#3264c4" stroke-width="0.9"/><ellipse cx="159.1" cy="43.5" rx="1.1" ry="0.6" fill="#2a5aa8"/><path d="M168.71 52.25 L168.47 53.06 L167.32 53.30 L166.90 53.81 L166.88 54.98 L166.13 55.38 L165.15 54.74 L164.49 54.80 L163.65 55.61 L162.84 55.37 L162.60 54.22 L162.09 53.80 L160.92 53.78 L160.52 53.03 L161.16 52.05 L161.10 51.39 L160.29 50.55 L160.53 49.74 L161.68 49.50 L162.10 48.99 L162.12 47.82 L162.87 47.42 L163.85 48.06 L164.51 48.00 L165.35 47.19 L166.16 47.43 L166.40 48.58 L166.91 49.00 L168.08 49.02 L168.48 49.77 L167.84 50.75 L167.90 51.41 Z" fill="#eed890" stroke="#7a5a2a" stroke-width="0.8" stroke-linejoin="round"/><circle cx="164.5" cy="51.400000000000006" r="1.3" fill="#f4e6b4" stroke="#9a7a40" stroke-width="0.6"/><circle cx="164.5" cy="51.400000000000006" r="0.45" fill="#8a6a38"/><path d="M172.3 47 H177.3 L174.8 50.8 Z" fill="#111"/><rect x="183.4" y="37" width="1" height="21" fill="#bdbdbd"/><path d="M198.6 49.6 L203.2 54.2" stroke="#4d4d4d" stroke-width="2.6" stroke-linecap="round"/><circle cx="194.8" cy="45.9" r="4.2" fill="#fffbe6" stroke="#6e6e6e" stroke-width="1.3"/><rect x="211.4" y="37" width="1" height="21" fill="#bdbdbd"/><rect x="217.9" y="40.9" width="8.2" height="4.8" rx="1" fill="url(#yel)" stroke="#b4944c" stroke-width="1"/><rect x="224.1" y="44.9" width="7.800000000000001" height="4.9" rx="1" fill="url(#yel)" stroke="#b4944c" stroke-width="1"/><rect x="220.9" y="48.9" width="8.5" height="6.3" rx="1" fill="url(#yel)" stroke="#b4944c" stroke-width="1"/><path d="M236.1 47 H241.1 L238.6 50.8 Z" fill="#111"/><rect x="249.5" y="42.5" width="11" height="11" fill="#dcf0f6" stroke="#3c3c3c" stroke-width="1"/><rect x="251" y="44" width="8" height="2" fill="#4e7e9e"/><rect x="251.2" y="47.0" width="1.6" height="1.7" fill="#4a6478"/><rect x="254.2" y="47.0" width="1.6" height="1.7" fill="#4a6478"/><rect x="257.2" y="47.0" width="1.6" height="1.7" fill="#4a6478"/><rect x="251.2" y="50.1" width="1.6" height="1.7" fill="#4a6478"/><rect x="254.2" y="50.1" width="1.6" height="1.7" fill="#4a6478"/><rect x="257.2" y="50.1" width="1.6" height="1.7" fill="#4a6478"/><path d="M265.9 47 H270.9 L268.4 50.8 Z" fill="#111"/><path d="M277.5 47.5 V54.3 H292.5 V47.5 H289.2 V51.7 H280.8 V47.5 Z" fill="#a6b6e6" stroke="#4a5a84" stroke-width="0.9"/><path d="M283.3 49.6 L289.8 43.4" stroke="#3a4a64" stroke-width="0.9"/><path d="M287 42.2 H291 V46.2 Z" fill="#2a5a80"/><path d="M295.9 47 H300.9 L298.4 50.8 Z" fill="#111"/><rect x="307.3" y="37" width="1" height="21" fill="#bdbdbd"/><g fill="#223f72"><rect x="316" y="43" width="3" height="8"/><rect x="320" y="45" width="3" height="9"/><rect x="324" y="42" width="3" height="12"/></g><path d="M313.5 51.5 C314 49 316.5 48.5 318 49.5 L318.5 48.6 L321.5 51.8 L318.6 54.8 L318.3 53.6 C317 55.5 315 55.6 314.8 54 C314 53.6 313.3 52.7 313.5 51.5 Z" fill="#f6dc80" stroke="#a88a3a" stroke-width="0.8"/><g transform="translate(0.9000000000000004,33.1)"><rect x="14.1" y="42.1" width="2.2" height="1.7" rx="0.4" fill="#1d4f94"/><path d="M12.9 45.2 H16.3 V51.9 H17.1 V52.9 H12.9 V51.9 H14.1 V46.2 H12.9 Z" fill="url(#infog)"/></g><path d="M85.5 76.5 V83.0 C85.5 85.2 88.0 86.0 91.0 86.0 C94.0 86.0 96.5 85.2 96.5 83.0 V76.5 Z" fill="url(#dbfill)" stroke="#3264c4" stroke-width="0.9"/><path d="M85.5 78.66666666666667 C85.5 81.06666666666668 88.0 81.66666666666667 91.0 81.66666666666667 C94.0 81.66666666666667 96.5 81.06666666666668 96.5 78.66666666666667" fill="none" stroke="#3264c4" stroke-width="0.9"/><path d="M85.5 80.83333333333333 C85.5 83.23333333333333 88.0 83.83333333333333 91.0 83.83333333333333 C94.0 83.83333333333333 96.5 83.23333333333333 96.5 80.83333333333333" fill="none" stroke="#3264c4" stroke-width="0.9"/><ellipse cx="91.0" cy="76.5" rx="5.5" ry="3.0" fill="#b4defc" stroke="#3264c4" stroke-width="0.9"/><ellipse cx="91.0" cy="76.5" rx="1.1" ry="0.6" fill="#2a5aa8"/><path d="M100.61 85.25 L100.37 86.06 L99.22 86.30 L98.80 86.81 L98.78 87.98 L98.03 88.38 L97.05 87.74 L96.39 87.80 L95.55 88.61 L94.74 88.37 L94.50 87.22 L93.99 86.80 L92.82 86.78 L92.42 86.03 L93.06 85.05 L93.00 84.39 L92.19 83.55 L92.43 82.74 L93.58 82.50 L94.00 81.99 L94.02 80.82 L94.77 80.42 L95.75 81.06 L96.41 81.00 L97.25 80.19 L98.06 80.43 L98.30 81.58 L98.81 82.00 L99.98 82.02 L100.38 82.77 L99.74 83.75 L99.80 84.41 Z" fill="#eed890" stroke="#7a5a2a" stroke-width="0.8" stroke-linejoin="round"/><circle cx="96.4" cy="84.4" r="1.3" fill="#f4e6b4" stroke="#9a7a40" stroke-width="0.6"/><circle cx="96.4" cy="84.4" r="0.45" fill="#8a6a38"/><g transform="translate(317,33)" fill="#223f72"><rect x="32" y="43" width="3" height="11"/><rect x="36" y="45" width="3" height="9"/><rect x="40" y="42" width="3" height="12"/></g><g transform="translate(378.0,33.0)"><path d="M57.5 46.5 V53.8 H62.5 M57.5 49.3 H62.5" fill="none" stroke="#707070" stroke-width="0.9"/><rect x="53.7" y="40.7" width="6.6" height="6" rx="0.6" fill="#8ccc86" stroke="#3a6a3a" stroke-width="1"/><rect x="62.4" y="47.7" width="4.3" height="2.9" rx="0.5" fill="#a9d3fa" stroke="#3a6ab4" stroke-width="0.9"/><rect x="62.4" y="52.3" width="4.3" height="3.1" rx="0.5" fill="#a9d3fa" stroke="#3a6ab4" stroke-width="0.9"/></g><g transform="translate(536.8,75.8) scale(1.02)"><path d="M0.6 0.6 H3 L5 2.7 L7 0.6 H9.4 V3 L7.3 5 L9.4 7 V9.4 H7 L5 7.3 L3 9.4 H0.6 V7 L2.7 5 L0.6 3 Z" fill="#fff" stroke="#111" stroke-width="1.05" stroke-linejoin="round"/></g><path d="M559.5 76.5 V83.0 C559.5 85.2 562.0 86.0 565.0 86.0 C568.0 86.0 570.5 85.2 570.5 83.0 V76.5 Z" fill="url(#dbfill)" stroke="#3264c4" stroke-width="0.9"/><path d="M559.5 78.66666666666667 C559.5 81.06666666666668 562.0 81.66666666666667 565.0 81.66666666666667 C568.0 81.66666666666667 570.5 81.06666666666668 570.5 78.66666666666667" fill="none" stroke="#3264c4" stroke-width="0.9"/><path d="M559.5 80.83333333333333 C559.5 83.23333333333333 562.0 83.83333333333333 565.0 83.83333333333333 C568.0 83.83333333333333 570.5 83.23333333333333 570.5 80.83333333333333" fill="none" stroke="#3264c4" stroke-width="0.9"/><ellipse cx="565.0" cy="76.5" rx="5.5" ry="3.0" fill="#b4defc" stroke="#3264c4" stroke-width="0.9"/><ellipse cx="565.0" cy="76.5" rx="1.1" ry="0.6" fill="#2a5aa8"/><path d="M574.61 85.25 L574.37 86.06 L573.22 86.30 L572.80 86.81 L572.78 87.98 L572.03 88.38 L571.05 87.74 L570.39 87.80 L569.55 88.61 L568.74 88.37 L568.50 87.22 L567.99 86.80 L566.82 86.78 L566.42 86.03 L567.06 85.05 L567.00 84.39 L566.19 83.55 L566.43 82.74 L567.58 82.50 L568.00 81.99 L568.02 80.82 L568.77 80.42 L569.75 81.06 L570.41 81.00 L571.25 80.19 L572.06 80.43 L572.30 81.58 L572.81 82.00 L573.98 82.02 L574.38 82.77 L573.74 83.75 L573.80 84.41 Z" fill="#eed890" stroke="#7a5a2a" stroke-width="0.8" stroke-linejoin="round"/><circle cx="570.4" cy="84.4" r="1.3" fill="#f4e6b4" stroke="#9a7a40" stroke-width="0.6"/><circle cx="570.4" cy="84.4" r="0.45" fill="#8a6a38"/><path d="M698.5 76.5 V83.0 C698.5 85.2 701.0 86.0 704.0 86.0 C707.0 86.0 709.5 85.2 709.5 83.0 V76.5 Z" fill="url(#dbfill)" stroke="#3264c4" stroke-width="0.9"/><path d="M698.5 78.66666666666667 C698.5 81.06666666666668 701.0 81.66666666666667 704.0 81.66666666666667 C707.0 81.66666666666667 709.5 81.06666666666668 709.5 78.66666666666667" fill="none" stroke="#3264c4" stroke-width="0.9"/><path d="M698.5 80.83333333333333 C698.5 83.23333333333333 701.0 83.83333333333333 704.0 83.83333333333333 C707.0 83.83333333333333 709.5 83.23333333333333 709.5 80.83333333333333" fill="none" stroke="#3264c4" stroke-width="0.9"/><ellipse cx="704.0" cy="76.5" rx="5.5" ry="3.0" fill="#b4defc" stroke="#3264c4" stroke-width="0.9"/><ellipse cx="704.0" cy="76.5" rx="1.1" ry="0.6" fill="#2a5aa8"/><path d="M713.61 85.25 L713.37 86.06 L712.22 86.30 L711.80 86.81 L711.78 87.98 L711.03 88.38 L710.05 87.74 L709.39 87.80 L708.55 88.61 L707.74 88.37 L707.50 87.22 L706.99 86.80 L705.82 86.78 L705.42 86.03 L706.06 85.05 L706.00 84.39 L705.19 83.55 L705.43 82.74 L706.58 82.50 L707.00 81.99 L707.02 80.82 L707.77 80.42 L708.75 81.06 L709.41 81.00 L710.25 80.19 L711.06 80.43 L711.30 81.58 L711.81 82.00 L712.98 82.02 L713.38 82.77 L712.74 83.75 L712.80 84.41 Z" fill="#eed890" stroke="#7a5a2a" stroke-width="0.8" stroke-linejoin="round"/><circle cx="709.4" cy="84.4" r="1.3" fill="#f4e6b4" stroke="#9a7a40" stroke-width="0.6"/><circle cx="709.4" cy="84.4" r="0.45" fill="#8a6a38"/><g stroke="#566676" stroke-width="1.1" fill="none"><path d="M24 116.4 H31"/><path d="M24 126.3 H31"/><path d="M33.4 114 V118.8 M33.4 124 V128.9"/></g><path d="M29.2 114.2 L32 116.4 L29.2 118.6 Z M29.2 124.1 L32 126.3 L29.2 128.5 Z" fill="#566676"/><path d="M28.3 120.2 H35.6 V118.2 L39.6 121.3 L35.6 124.4 V122.4 H28.3 Z" fill="#f8dc96" stroke="#c09448" stroke-width="0.9" stroke-linejoin="round"/></svg>
</div></body></html>
